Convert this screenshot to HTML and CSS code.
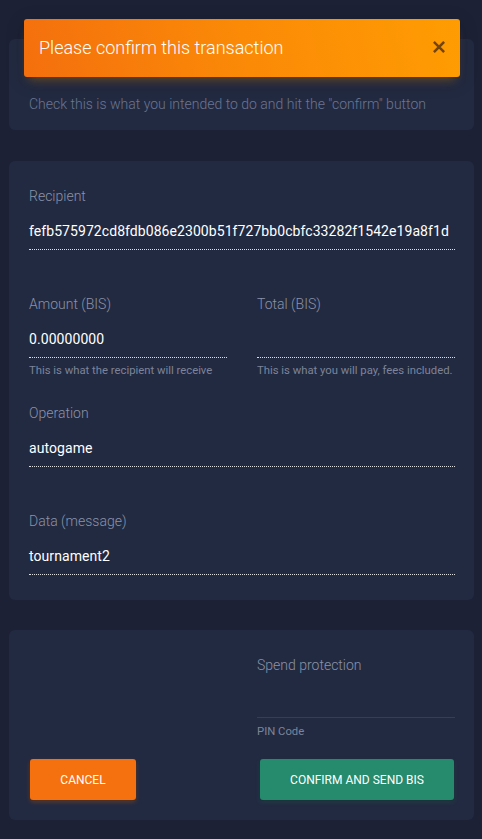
FILE: index.html
```html
<!DOCTYPE html>
<html lang="en">
<head>
<meta charset="utf-8">
<title>Confirm transaction</title>
<link rel="stylesheet" href="styles.css">
</head>
<body>
<main class="page">
  <section class="card card-intro">
    <div class="card-header">
      <h4 class="card-title">Please confirm this transaction</h4>
      <button class="close" aria-label="Close">
        <svg width="12" height="12" viewBox="0 0 12 12"><path d="M1.8 1.8 L10.2 10.2 M10.2 1.8 L1.8 10.2" stroke="currentColor" stroke-width="2.5" stroke-linecap="square" fill="none"/></svg>
      </button>
    </div>
    <p class="card-sub">Check this is what you intended to do and hit the "confirm" button</p>
  </section>

  <section class="card card-form">
    <div class="group">
      <label class="label">Recipient</label>
      <div class="value">fefb575972cd8fdb086e2300b51f727bb0cbfc33282f1542e19a8f1d</div>
    </div>
    <div class="row">
      <div class="group has-help">
        <label class="label">Amount (BIS)</label>
        <div class="value">0.00000000</div>
        <small class="help">This is what the recipient will receive</small>
      </div>
      <div class="group has-help">
        <label class="label">Total (BIS)</label>
        <div class="value"></div>
        <small class="help">This is what you will pay, fees included.</small>
      </div>
    </div>
    <div class="group">
      <label class="label">Operation</label>
      <div class="value">autogame</div>
    </div>
    <div class="group last">
      <label class="label">Data (message)</label>
      <div class="value">tournament2</div>
    </div>
  </section>

  <section class="card card-actions">
    <div class="row">
      <div></div>
      <div class="group">
        <label class="label">Spend protection</label>
        <div class="pin"></div>
        <small class="help pin-help">PIN Code</small>
      </div>
    </div>
    <div class="row buttons">
      <div><button class="btn btn-cancel">Cancel</button></div>
      <div><button class="btn btn-confirm">Confirm and send BIS</button></div>
    </div>
  </section>
</main>
</body>
</html>
```

FILE: styles.css
```css
* { box-sizing: border-box; }

html, body {
  margin: 0;
  background: #1c2135;
  font-family: Roboto, "Noto Sans", "Liberation Sans", sans-serif;
  color: #ffffff;
}

.page {
  padding: 39px 8px 19px 9px;
  display: flex;
  flex-direction: column;
  gap: 31px;
}

.card {
  background: #222a41;
  border-radius: 6px;
  padding: 0 19px 0 20px;
}

.card-intro { padding: 0; }

.card-header {
  margin: -20px 14px 0 15px;
  height: 58px;
  border-radius: 3px;
  background: linear-gradient(75deg, #f46f0e 0%, #fb8a07 50%, #ff9c02 100%);
  box-shadow: 0 4px 20px 0 rgba(0, 0, 0, 0.14), 0 7px 10px -5px rgba(255, 152, 0, 0.4);
  display: flex;
  align-items: center;
  justify-content: space-between;
  padding: 0 15px;
}

.card-title {
  margin: 0;
  font-size: 18px;
  font-weight: 300;
  line-height: 24px;
  color: #fff;
}

.close {
  border: 0;
  background: none;
  padding: 0;
  margin: 0 0 2px 0;
  width: 12px;
  height: 12px;
  color: rgba(60, 35, 10, 0.72);
  display: block;
}
.close svg { display: block; }

.card-sub {
  margin: 0;
  padding: 17px 20px 16px;
  font-size: 14px;
  line-height: 20px;
  font-weight: 300;
  color: #6c7591;
}

.card-form { padding-top: 25px; padding-bottom: 25px; }
.card-actions { padding-top: 25px; padding-bottom: 20px; margin-top: -1px; }

.row {
  display: grid;
  grid-template-columns: 1fr 1fr;
  column-gap: 30px;
}

.group { display: flex; flex-direction: column; margin-bottom: 44px; }
.group.has-help { margin-bottom: 25px; }
.group.last { margin-bottom: 0; }

.label {
  font-size: 14px;
  line-height: 20px;
  font-weight: 300;
  color: #8b92a8;
}

.value {
  margin-top: 15px;
  font-size: 14px;
  line-height: 20px;
  letter-spacing: 0.07px;
  height: 29px;
  padding: 0 0 8px 0;
  border-bottom: 1px dotted rgba(255, 255, 255, 0.85);
  white-space: nowrap;
  color: #fff;
}

.help {
  margin-top: 6px;
  font-size: 11.3px;
  line-height: 14px;
  color: #7d8499;
}

.card-actions .group { margin-bottom: 0; }

.pin {
  height: 43px;
  border-bottom: 1px solid #363d57;
}
.pin-help { margin-top: 7px; }

.buttons { margin-top: 20px; }

.btn {
  border: 0;
  border-radius: 3px;
  height: 41px;
  font-family: inherit;
  font-size: 12px;
  font-weight: 400;
  text-transform: uppercase;
  color: #fff;
  display: block;
}

.btn-cancel {
  margin-left: 1px;
  width: 106px;
  background: #f5700e;
  box-shadow: 0 2px 4px rgba(245, 112, 14, 0.3), 0 1px 2px rgba(0, 0, 0, 0.3);
}

.btn-confirm {
  margin-left: 3px;
  width: 194px;
  background: #268a6c;
  box-shadow: 0 2px 4px rgba(38, 138, 108, 0.25), 0 1px 2px rgba(0, 0, 0, 0.3);
}
```
